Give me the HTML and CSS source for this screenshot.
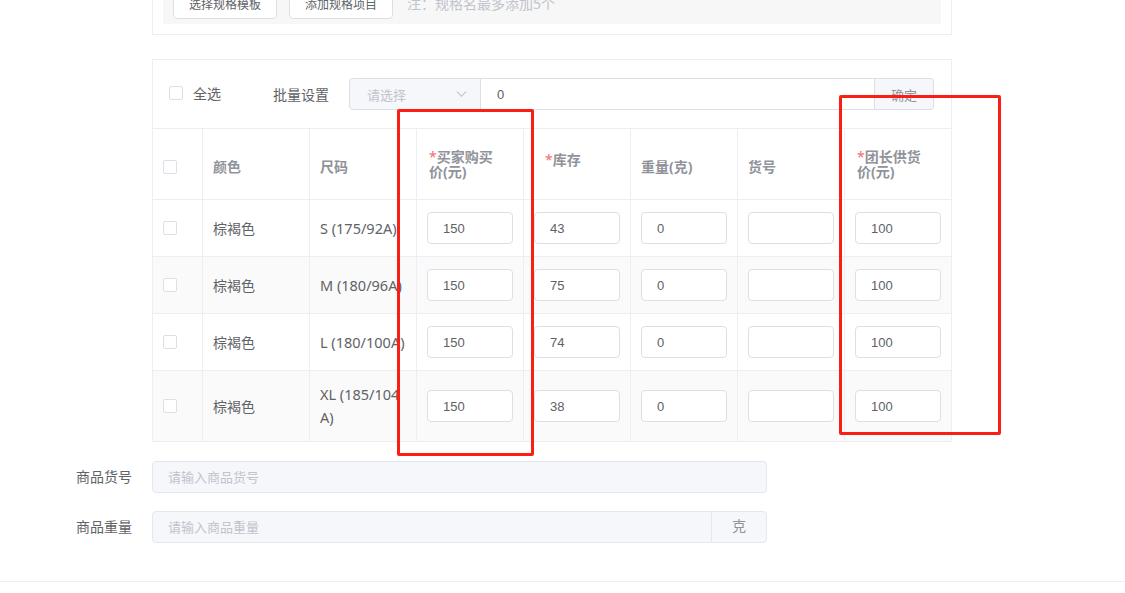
FILE: index.html
```html
<!DOCTYPE html>
<html lang="zh-CN">
<head>
    <meta charset="UTF-8">
    <meta name="viewport" content="width=device-width, initial-scale=1.0">
    <title>商品规格</title>
    <link rel="stylesheet" href="styles.css">
</head>
<body>
    <div class="page">
        <!-- Spec + SKU section -->
        <div class="form-row">
            <div class="form-label"></div>
            <div class="form-content">
                <div class="spec-card">
                    <div class="spec-bar">
                        <button class="btn">选择规格模板</button>
                        <button class="btn">添加规格项目</button>
                        <span class="spec-tip">注：规格名最多添加5个</span>
                    </div>
                </div>

                <div class="sku-card">
                    <div class="batch-bar">
                        <label class="check-all"><span class="checkbox"></span>全选</label>
                        <span class="batch-label">批量设置</span>
                        <div class="batch-group">
                            <div class="batch-select">
                                <span>请选择</span>
                                <svg width="11" height="6" viewBox="0 0 11 6"><path d="M0.8 0.6 L5.5 5.2 L10.2 0.6" fill="none" stroke="#c0c4cc" stroke-width="1.1"/></svg>
                            </div>
                            <input class="batch-input" value="0">
                            <button class="batch-btn">确定</button>
                        </div>
                    </div>

                    <div class="sku-table">
                        <div class="sku-row sku-head">
                            <div class="cell"><span class="checkbox"></span></div>
                            <div class="cell"><div>颜色</div></div>
                            <div class="cell"><div>尺码</div></div>
                            <div class="cell th-req"><div><span class="req">*</span>买家购买<br>价(元)</div></div>
                            <div class="cell th-req th-stock"><div><span class="req">*</span>库存</div></div>
                            <div class="cell"><div>重量(克)</div></div>
                            <div class="cell"><div>货号</div></div>
                            <div class="cell th-req"><div><span class="req">*</span>团长供货<br>价(元)</div></div>
                        </div>

                        <div class="sku-row">
                            <div class="cell"><span class="checkbox"></span></div>
                            <div class="cell"><div>棕褐色</div></div>
                            <div class="cell"><div class="size">S (175/92A)</div></div>
                            <div class="cell"><input class="cell-input" value="150"></div>
                            <div class="cell"><input class="cell-input" value="43"></div>
                            <div class="cell"><input class="cell-input" value="0"></div>
                            <div class="cell"><input class="cell-input" value=""></div>
                            <div class="cell"><input class="cell-input" value="100"></div>
                        </div>

                        <div class="sku-row striped">
                            <div class="cell"><span class="checkbox"></span></div>
                            <div class="cell"><div>棕褐色</div></div>
                            <div class="cell"><div class="size">M (180/96A)</div></div>
                            <div class="cell"><input class="cell-input" value="150"></div>
                            <div class="cell"><input class="cell-input" value="75"></div>
                            <div class="cell"><input class="cell-input" value="0"></div>
                            <div class="cell"><input class="cell-input" value=""></div>
                            <div class="cell"><input class="cell-input" value="100"></div>
                        </div>

                        <div class="sku-row">
                            <div class="cell"><span class="checkbox"></span></div>
                            <div class="cell"><div>棕褐色</div></div>
                            <div class="cell"><div class="size">L (180/100A)</div></div>
                            <div class="cell"><input class="cell-input" value="150"></div>
                            <div class="cell"><input class="cell-input" value="74"></div>
                            <div class="cell"><input class="cell-input" value="0"></div>
                            <div class="cell"><input class="cell-input" value=""></div>
                            <div class="cell"><input class="cell-input" value="100"></div>
                        </div>

                        <div class="sku-row striped">
                            <div class="cell"><span class="checkbox"></span></div>
                            <div class="cell"><div>棕褐色</div></div>
                            <div class="cell"><div class="size">XL (185/104<br>A)</div></div>
                            <div class="cell"><input class="cell-input" value="150"></div>
                            <div class="cell"><input class="cell-input" value="38"></div>
                            <div class="cell"><input class="cell-input" value="0"></div>
                            <div class="cell"><input class="cell-input" value=""></div>
                            <div class="cell"><input class="cell-input" value="100"></div>
                        </div>
                    </div>
                </div>
            </div>
        </div>

        <!-- Product fields -->
        <div class="form-row field-row">
            <div class="form-label">商品货号</div>
            <div class="field-group">
                <input class="field-input" placeholder="请输入商品货号" disabled>
            </div>
        </div>
        <div class="form-row field-row">
            <div class="form-label">商品重量</div>
            <div class="field-group">
                <input class="field-input" placeholder="请输入商品重量" disabled>
                <span class="field-append">克</span>
            </div>
        </div>
    </div>

    <div class="footer-bar"></div>

    <!-- annotation marks -->
    <div class="mark mark-buyer"></div>
    <div class="mark mark-leader"></div>
</body>
</html>
```

FILE: styles.css
```css
body {
    margin: 0;
    font-family: "Noto Sans", "Noto Sans CJK SC", sans-serif;
    font-size: 14px;
    color: #606266;
    background: #fff;
}

.page {
    padding-left: 52px;
}

.form-row {
    display: flex;
}

.form-label {
    width: 100px;
    flex: none;
    box-sizing: border-box;
    padding-right: 20px;
    text-align: right;
    line-height: 31px;
}

.form-content {
    width: 800px;
}

/* Spec block */
.spec-card {
    margin-top: -34px;
    border: 1px solid #ebeef5;
    padding: 10px;
}

.spec-bar {
    display: flex;
    align-items: center;
    background: #f7f7f7;
    padding: 10px 10px 5px;
}

.btn {
    height: 32px;
    padding: 0 15px;
    border: 1px solid #dcdfe6;
    border-radius: 4px;
    background: #fff;
    color: #606266;
    font-family: "Noto Sans CJK SC", sans-serif;
    font-size: 12px;
}

.btn + .btn {
    margin-left: 12px;
}

.spec-tip {
    margin-left: 14px;
    color: #c0c4cc;
}

/* SKU block */
.sku-card {
    margin-top: 24px;
    border: 1px solid #ebeef5;
}

.batch-bar {
    display: flex;
    align-items: center;
    padding: 18px 16px;
}

.check-all {
    display: flex;
    align-items: center;
    gap: 10px;
    margin-bottom: 3px;
}

.checkbox {
    display: block;
    width: 14px;
    height: 14px;
    box-sizing: border-box;
    border: 1px solid #dcdfe6;
    border-radius: 2px;
    background: #fff;
}

.batch-label {
    margin-left: 52px;
    margin-right: 20px;
}

.batch-group {
    display: flex;
    height: 32px;
}

.batch-select {
    width: 132px;
    box-sizing: border-box;
    display: flex;
    align-items: center;
    justify-content: space-between;
    padding: 0 13px 0 17px;
    border: 1px solid #dcdfe6;
    border-radius: 4px 0 0 4px;
    background: #f5f7fa;
    color: #c0c4cc;
    font-size: 13px;
}

.batch-input {
    width: 394px;
    height: 32px;
    box-sizing: border-box;
    padding: 0 16px;
    border: 1px solid #dcdfe6;
    border-left: none;
    outline: none;
    color: #606266;
    font-family: "Liberation Sans", sans-serif;
    font-size: 13px;
}

.batch-btn {
    width: 59px;
    height: 32px;
    border: 1px solid #dcdfe6;
    border-left: none;
    border-radius: 0 4px 4px 0;
    background: #f5f7fa;
    color: #909399;
    font-family: "Noto Sans CJK SC", sans-serif;
    font-size: 13px;
    padding: 0;
}

.sku-row {
    display: grid;
    grid-template-columns: 50px repeat(6, 107px) 1fr;
    border-top: 1px solid #ebeef5;
}

.sku-row.striped {
    background: #fafafa;
}

.cell {
    display: flex;
    align-items: center;
    box-sizing: border-box;
    padding: 12px 10px;
    border-right: 1px solid #ebeef5;
    line-height: 23px;
    word-break: break-all;
}

.cell:last-child {
    border-right: none;
}

.size {
    font-size: 14.5px;
}

.sku-head .cell {
    height: 70px;
    padding: 5px 10px 0;
    color: #909399;
    font-weight: 700;
    line-height: 15px;
}

.sku-head .th-req {
    padding: 0 10px 0 12px;
}

.sku-head .th-stock {
    padding: 0 10px 10px 21px;
}

.req {
    color: #f56c6c;
    font-weight: 400;
}

.cell-input {
    width: 100%;
    height: 32px;
    box-sizing: border-box;
    padding: 0 15px;
    border: 1px solid #dcdfe6;
    border-radius: 4px;
    background: #fff;
    outline: none;
    color: #606266;
    font-family: "Liberation Sans", sans-serif;
    font-size: 13px;
}

/* Product fields */
.field-row {
    margin-top: 19px;
}

.field-row + .field-row {
    margin-top: 18px;
}

.field-group {
    display: flex;
    width: 615px;
    height: 32px;
    box-sizing: border-box;
    border: 1px solid #e4e7ed;
    border-radius: 4px;
    background: #f5f7fa;
    overflow: hidden;
}

.field-input {
    flex: 1;
    min-width: 0;
    padding: 0 15px 2px;
    border: none;
    background: transparent;
    outline: none;
    font-family: "Noto Sans CJK SC", sans-serif;
    font-size: 13px;
}

.field-input::placeholder {
    color: #c0c4cc;
}

.field-append {
    width: 54px;
    flex: none;
    border-left: 1px solid #e4e7ed;
    text-align: center;
    line-height: 28px;
    color: #909399;
    font-size: 14px;
}

.footer-bar {
    margin-top: 38px;
    height: 12px;
    border-top: 1px solid #ebeef5;
}

/* Red annotation marks */
.mark {
    position: absolute;
    box-sizing: border-box;
    border: 3px solid #fa1e14;
    border-radius: 2px;
    pointer-events: none;
}

.mark-buyer {
    left: 397px;
    top: 109px;
    width: 137px;
    height: 347px;
}

.mark-leader {
    left: 839px;
    top: 95px;
    width: 162px;
    height: 340px;
}
```
